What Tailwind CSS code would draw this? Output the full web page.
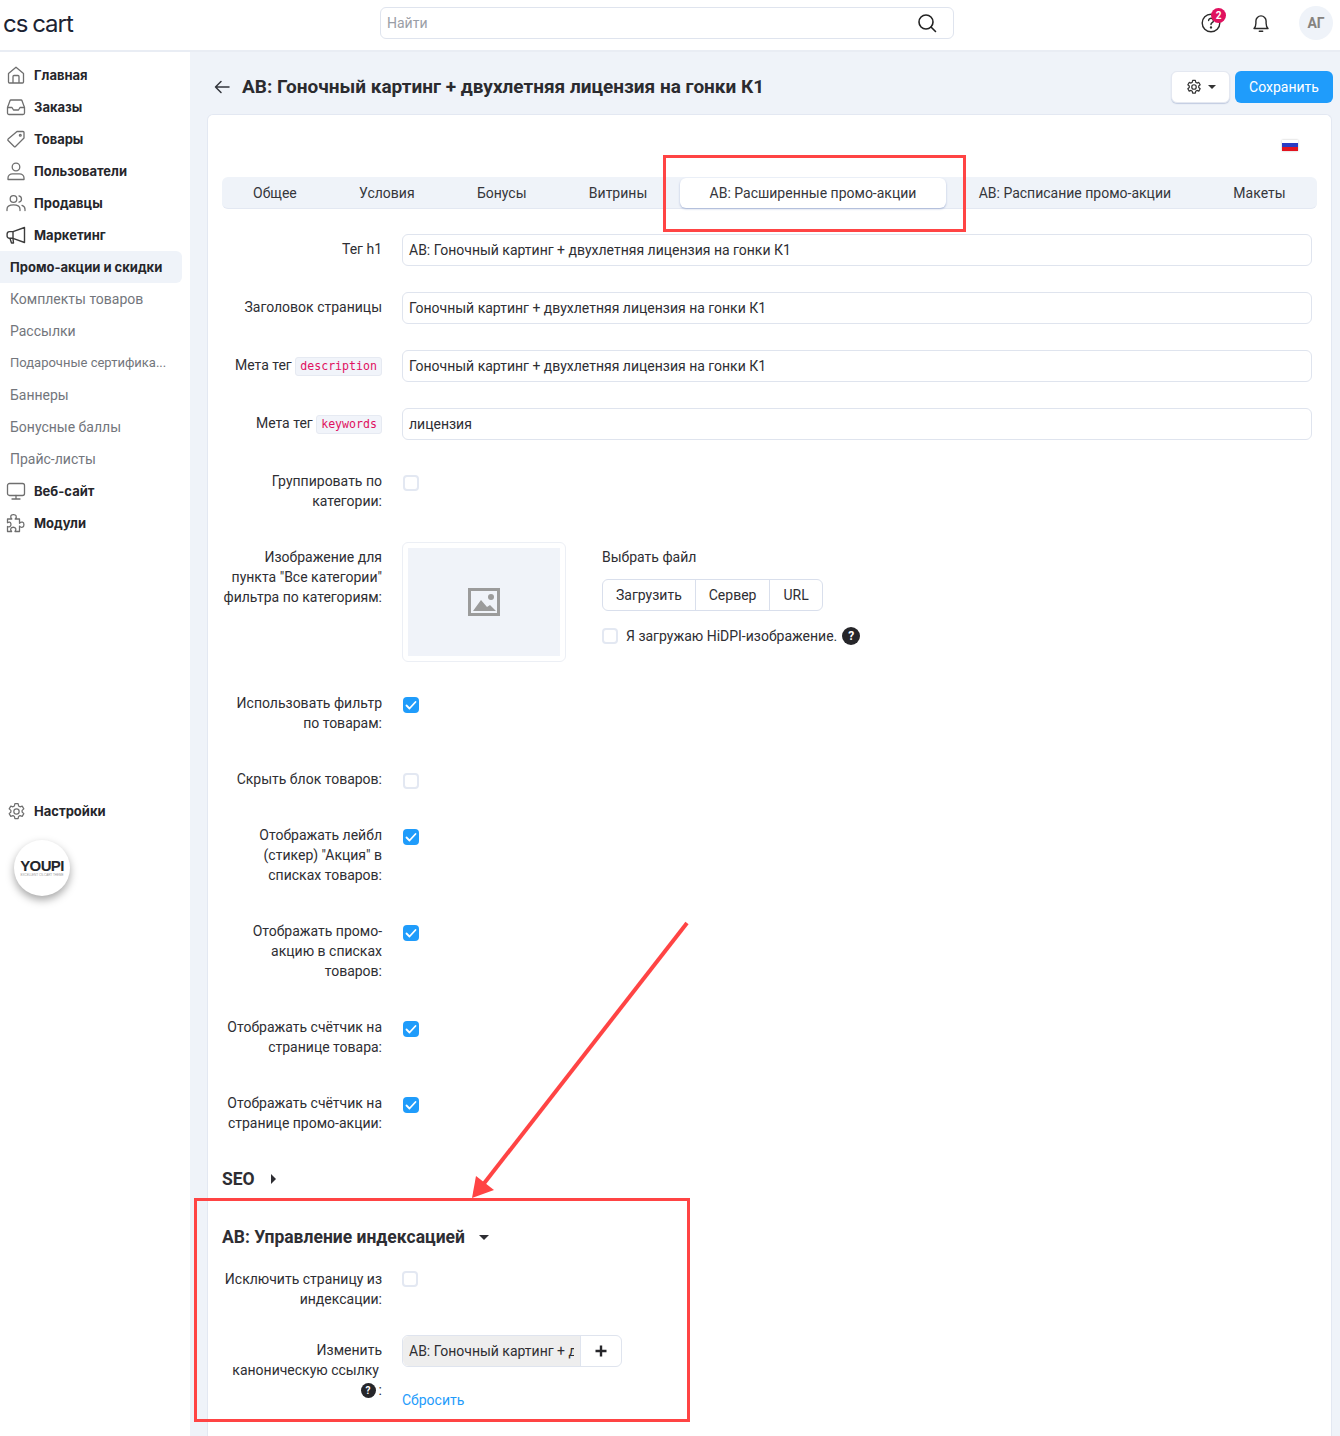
<!DOCTYPE html>
<html lang="ru">
<head>
	<meta charset="UTF-8">
	<title>АВ: Гоночный картинг + двухлетняя лицензия на гонки К1</title>
	<script src="https://cdn.jsdelivr.net/npm/@tailwindcss/browser@4"></script>
</head>
<body class="relative w-[1340px] h-[1436px] overflow-hidden bg-[#eff3f9] font-['Roboto',sans-serif] text-[14px] leading-5 text-[#2e2e33]">

	<!-- top bar -->
	<header class="h-[52px] bg-white border-b-2 border-[#e9edf4] flex items-center relative">
		<div class="pl-[3px] w-[380px] font-['Inter',sans-serif] font-normal text-[24px] leading-none tracking-[-1px] [word-spacing:-1px] text-[#1c2333] pb-[3px]">cs cart</div>
		<div class="w-[574px] h-8 mb-[4px] border border-[#dfe4ee] rounded-md flex items-center justify-between pl-[6px] pr-[16px] text-[#9a9ea6]">
			<span>Найти</span>
			<svg class="w-[20px] h-[20px]" viewBox="0 0 20 20" fill="none" stroke="#222" stroke-width="1.6"><circle cx="9" cy="9" r="7"/><path d="M14 14l4.5 4.5" stroke-linecap="round"/></svg>
		</div>
		<div class="ml-auto flex items-center pr-[7px] pb-[4px]">
			<div class="relative w-[20px] h-[20px] mr-[30px]">
				<svg class="w-[20px] h-[20px]" viewBox="0 0 20 20" fill="none" stroke="#2b2b2b" stroke-width="1.4"><circle cx="10" cy="10" r="8.8"/><path d="M7.6 7.6a2.4 2.4 0 1 1 3.6 2.1c-.8.5-1.2 1-1.2 1.9" stroke-linecap="round"/><circle cx="10" cy="14.4" r=".5"/></svg>
				<span class="absolute left-[10px] top-[-5px] w-[15px] h-[15px] rounded-full bg-[#e0115f] text-white text-[10px] leading-[15px] font-bold text-center">2</span>
			</div>
			<svg class="w-[20px] h-[20px] mr-[28px]" viewBox="0 0 20 20" fill="none" stroke="#2b2b2b" stroke-width="1.4"><path d="M3 15.5c1.4-1.3 1.9-2.6 1.9-5.2V8a5.1 5.1 0 0 1 10.2 0v2.3c0 2.6.5 3.9 1.9 5.2z" stroke-linejoin="round"/><path d="M8.3 18.3h3.4" stroke-linecap="round"/></svg>
			<div class="w-[34px] h-[34px] rounded-full bg-[#eff3f9] flex items-center justify-center font-bold text-[#86837f]">АГ</div>
		</div>
	</header>

	<div class="flex h-[1384px]">
		<!-- sidebar -->
		<aside class="w-[190px] shrink-0 bg-white pt-[7px] font-['Inter',sans-serif]">
			<a class="flex items-center h-8 pl-[6px] gap-[8px] font-bold text-[13px] text-[#26262b]">
				<svg class="w-[20px] h-[20px] shrink-0" viewBox="0 0 20 20" fill="none" stroke="#6f6f6f" stroke-width="1.3" stroke-linejoin="round"><path d="M2.5 8.6 10 2.2l7.500 6.400V17a1 1 0 0 1-1 1h-13a1 1 0 0 1-1-1z"/><path d="M7 18v-6.500a1 1 0 0 1 1-1h4a1 1 0 0 1 1 1V18"/></svg>
				Главная</a>
			<a class="flex items-center h-8 pl-[6px] gap-[8px] font-bold text-[13px] text-[#26262b]">
				<svg class="w-[20px] h-[20px] shrink-0" viewBox="0 0 20 20" fill="none" stroke="#6f6f6f" stroke-width="1.3" stroke-linejoin="round"><path d="M1.500 10.500 4 3.800a1 1 0 0 1 1-.8h10a1 1 0 0 1 1 .8l2.500 6.700V16a1.500 1.500 0 0 1-1.500 1.500H3A1.500 1.500 0 0 1 1.500 16z"/><path d="M1.500 10.500H6l1.500 2.500h5l1.500-2.500h4.500"/></svg>
				Заказы</a>
			<a class="flex items-center h-8 pl-[6px] gap-[8px] font-bold text-[13px] text-[#26262b]">
				<svg class="w-[20px] h-[20px] shrink-0" viewBox="0 0 20 20" fill="none" stroke="#6f6f6f" stroke-width="1.3" stroke-linejoin="round"><path d="M11 2.500h6a1 1 0 0 1 1 1V9l-8.500 8.500a1 1 0 0 1-1.400 0l-6-6a1 1 0 0 1 0-1.400z"/><circle cx="14.300" cy="6.200" r=".9"/></svg>
				Товары</a>
			<a class="flex items-center h-8 pl-[6px] gap-[8px] font-bold text-[13px] text-[#26262b]">
				<svg class="w-[20px] h-[20px] shrink-0" viewBox="0 0 20 20" fill="none" stroke="#6f6f6f" stroke-width="1.3" stroke-linejoin="round"><circle cx="10" cy="6" r="3.800"/><path d="M2 18.500v-1.500c0-2.500 2.200-4.200 4.500-4.200h7c2.300 0 4.500 1.700 4.500 4.200v1.500z"/></svg>
				Пользователи</a>
			<a class="flex items-center h-8 pl-[6px] gap-[8px] font-bold text-[13px] text-[#26262b]">
				<svg class="w-[20px] h-[20px] shrink-0" viewBox="0 0 20 20" fill="none" stroke="#6f6f6f" stroke-width="1.3" stroke-linecap="round"><circle cx="7.500" cy="6" r="3.300"/><path d="M1 17.500v-1.300c0-2.600 2.400-4.400 6.500-4.400s6.500 1.800 6.500 4.400v1.300"/><path d="M13 2.800a3.300 3.300 0 0 1 0 6.400M16 12.300c1.800.7 3 2 3 3.900v1.300"/></svg>
				Продавцы</a>
			<a class="flex items-center h-8 pl-[6px] gap-[8px] font-bold text-[13px] text-[#26262b]">
				<svg class="w-[20px] h-[20px] shrink-0" viewBox="0 0 20 20" fill="none" stroke="#3c3c3c" stroke-width="1.4" stroke-linejoin="round"><path d="M18.500 2.500v15L7 13.300H3.500a2.400 2.400 0 0 1-2.400-2.600V9a2.500 2.500 0 0 1 2.400-2.400H7z"/><path d="M7 6.600v6.700M4 13.500l1.500 4.500h2L7 13.500"/></svg>
				Маркетинг</a>
			<a class="flex items-center h-8 pl-[10px] mr-2 rounded-r-md bg-[#eff3f9] font-bold text-[13px] text-[#26262b]">Промо-акции и скидки</a>
			<div class="font-['Roboto',sans-serif] text-[14px] text-[#73767c]">
				<a class="flex items-center h-8 pl-[10px]">Комплекты товаров</a>
				<a class="flex items-center h-8 pl-[10px]">Рассылки</a>
				<a class="flex items-center h-8 pl-[10px] text-[13px]">Подарочные сертифика...</a>
				<a class="flex items-center h-8 pl-[10px]">Баннеры</a>
				<a class="flex items-center h-8 pl-[10px]">Бонусные баллы</a>
				<a class="flex items-center h-8 pl-[10px]">Прайс-листы</a>
			</div>
			<a class="flex items-center h-8 pl-[6px] gap-[8px] font-bold text-[13px] text-[#26262b]">
				<svg class="w-[20px] h-[20px] shrink-0" viewBox="0 0 20 20" fill="none" stroke="#6f6f6f" stroke-width="1.3" stroke-linejoin="round"><rect x="1.500" y="2.500" width="17" height="12" rx="2"/><path d="M10 14.500v3.500M6 18h8" stroke-linecap="round"/></svg>
				Веб-сайт</a>
			<a class="flex items-center h-8 pl-[6px] gap-[8px] font-bold text-[13px] text-[#26262b]">
				<svg class="w-[20px] h-[20px] shrink-0" viewBox="0 0 20 20" fill="none" stroke="#6f6f6f" stroke-width="1.3" stroke-linejoin="round"><path d="M1.500 6h4.300c-1-.9-1.300-1.800-1-3 .4-1.700 4.400-2 5.300-.2.500 1.100.2 2.200-.9 3.200h4.300v4.300c.9-1.100 2-1.400 3-1.100 1.900.6 1.900 4.400 0 5-1 .3-2.100 0-3-1.100v5.400H9c.9-1.100 1.100-2.100.7-3-.8-1.700-4.200-1.700-4.900 0-.4.900-.2 1.900.8 3H1.500v-5c1.100.6 2.200.6 2.900-.3 1-1.300.6-3.700-.7-4.100-.9-.2-1.600.1-2.200.6z"/></svg>
				Модули</a>
			<a class="flex items-center h-8 pl-[7px] gap-[8px] mt-[256px] font-bold text-[13px] text-[#26262b]">
				<svg class="w-[19px] h-[19px] shrink-0" viewBox="0 0 20 20" fill="none" stroke="#6f6f6f" stroke-width="1.300" stroke-linejoin="round"><path d="M8.300 1.800h3.400l.5 2.400 1.500.9 2.300-.8 1.700 2.900-1.800 1.600v1.800l1.800 1.600-1.700 2.900-2.300-.8-1.500.9-.5 2.400H8.300l-.5-2.400-1.500-.9-2.300.8-1.700-2.900 1.800-1.600V8.800L2.300 7.200 4 4.300l2.300.8 1.500-.9z"/><circle cx="10" cy="10" r="2.800"/></svg>
				Настройки</a>
			<div class="ml-[14px] mt-[13px] w-14 h-14 rounded-full bg-white shadow-[0_4px_9px_rgba(0,0,0,0.35)] flex flex-col items-center justify-center">
				<span class="font-['Liberation_Sans',sans-serif] font-bold text-[15px] leading-[14px] tracking-[-0.6px] text-[#23262c]">YOUPI</span>
				<span class="font-['Liberation_Sans',sans-serif] text-[3px] leading-[4px] text-[#999]">EXCELLENT CS-CART THEME</span>
			</div>
		</aside>

		<!-- main -->
		<main class="flex-1 min-w-0 pl-[17px] pr-[8px]">
			<div class="flex items-center h-8 mt-[19px] -mr-px">
				<svg class="w-[16px] h-[14px] ml-[7px] mr-[12px]" viewBox="0 0 16 14" fill="none" stroke="#33363d" stroke-width="1.500" stroke-linecap="round" stroke-linejoin="round"><path d="M15 7H1.500M7 1.500 1.500 7 7 12.500"/></svg>
				<h1 class="font-bold text-[19px] leading-6 text-[#2b2b2f]">АВ: Гоночный картинг + двухлетняя лицензия на гонки К1</h1>
				<div class="ml-auto w-[59px] h-8 bg-white rounded-md border border-[#e4e8f1] shadow-[0_1px_1px_rgba(150,165,200,0.5)] flex items-center justify-center gap-[6px] mr-[5px]">
					<svg class="w-[16px] h-[16px]" viewBox="0 0 20 20" fill="none" stroke="#333" stroke-width="1.500" stroke-linejoin="round"><path d="M8.300 1.800h3.400l.5 2.400 1.500.9 2.300-.8 1.700 2.900-1.800 1.600v1.800l1.800 1.600-1.700 2.900-2.300-.8-1.500.9-.5 2.400H8.300l-.5-2.400-1.500-.9-2.300.8-1.700-2.900 1.800-1.600V8.800L2.300 7.200 4 4.300l2.300.8 1.500-.9z"/><circle cx="10" cy="10" r="2.800"/></svg>
					<span class="w-0 h-0 border-x-[4px] border-x-transparent border-t-[4px] border-t-[#333]"></span>
				</div>
				<button class="w-[98px] h-8 rounded-md bg-[#1f9cfb] text-white">Сохранить</button>
			</div>

			<!-- card -->
			<section class="h-[1322px] mt-[11px] bg-white rounded-t-md border border-b-0 border-[#e3e8f2] pl-[14px] pr-[14px]">
				<div class="h-[62px] flex justify-end items-start pt-[25px] pr-[19px]">
					<div class="w-4 h-[11px] flex flex-col shadow-[0_0_2px_rgba(0,0,0,0.25)]">
						<span class="h-[3px] bg-white"></span><span class="h-1 bg-[#2a3bc4]"></span><span class="h-1 bg-[#e2131f]"></span>
					</div>
				</div>
				<nav class="h-8 rounded-md bg-[#eff3f9] border-b border-[#e3e8f2] flex items-center pl-[1px] gap-[2.300px] text-[#35363b]">
					<a class="px-[30px]">Общее</a>
					<a class="px-[30px]">Условия</a>
					<a class="px-[30px]">Бонусы</a>
					<a class="px-[30px]">Витрины</a>
					<a class="px-[30px] h-[30px] leading-[30px] bg-white rounded-md shadow-[0_1px_2px_rgba(120,140,190,0.6)] whitespace-nowrap">АВ: Расширенные промо-акции</a>
					<a class="px-[30px] whitespace-nowrap">АВ: Расписание промо-акции</a>
					<a class="px-[30px]">Макеты</a>
				</nav>

				<div class="pt-[25px] pr-[5px]">
					<div class="flex gap-5 mb-[26px]">
						<label class="w-[160px] shrink-0 text-right pt-[5px]">Тег h1</label>
						<div class="flex-1 h-8 border border-[#dfe4ee] rounded-md px-[6px] leading-[30px]">АВ: Гоночный картинг + двухлетняя лицензия на гонки К1</div>
					</div>
					<div class="flex gap-5 mb-[26px]">
						<label class="w-[160px] shrink-0 text-right pt-[5px]">Заголовок страницы</label>
						<div class="flex-1 h-8 border border-[#dfe4ee] rounded-md px-[6px] leading-[30px]">Гоночный картинг + двухлетняя лицензия на гонки К1</div>
					</div>
					<div class="flex gap-5 mb-[26px]">
						<label class="w-[160px] shrink-0 text-right pt-[5px] whitespace-nowrap">Мета тег <code class="inline-block h-[19px] px-[4px] rounded-[3px] border border-[#e6eaf2] bg-[#f1f4fa] font-['DejaVu_Sans_Mono',monospace] text-[11.600px] leading-[16px] text-[#e0115f] align-[0px]">description</code></label>
						<div class="flex-1 h-8 border border-[#dfe4ee] rounded-md px-[6px] leading-[30px]">Гоночный картинг + двухлетняя лицензия на гонки К1</div>
					</div>
					<div class="flex gap-5 mb-[26px]">
						<label class="w-[160px] shrink-0 text-right pt-[5px] whitespace-nowrap">Мета тег <code class="inline-block h-[19px] px-[4px] rounded-[3px] border border-[#e6eaf2] bg-[#f1f4fa] font-['DejaVu_Sans_Mono',monospace] text-[11.600px] leading-[16px] text-[#e0115f] align-[0px]">keywords</code></label>
						<div class="flex-1 h-8 border border-[#dfe4ee] rounded-md px-[6px] leading-[30px]">лицензия</div>
					</div>

					<div class="flex gap-5 mb-[31px]">
						<label class="w-[160px] shrink-0 text-right pt-[5px]">Группировать по категории:</label>
						<span class="ml-px mt-[9px] w-4 h-4 rounded-[4px] border-2 border-[#e3e8f2] bg-white"></span>
					</div>

					<div class="flex gap-5 mb-[24px]">
						<label class="w-[160px] shrink-0 text-right pt-[5px]">Изображение для пункта "Все категории" фильтра по категориям:</label>
						<div class="w-[164px] h-[120px] p-[5px] border border-[#eceff5] rounded-md">
							<div class="h-full bg-[#f0f3f9] flex items-center justify-center">
								<svg class="w-8 h-[28px]" viewBox="0 0 32 28"><path fill="#9b9b9b" fill-rule="evenodd" d="M0 0h32v28H0zM3 3v22h26V3z"/><path fill="#9b9b9b" d="M5 23l8-11 6 7 3-2 6 6z"/><circle fill="#9b9b9b" cx="23" cy="9" r="3"/></svg>
							</div>
						</div>
						<div class="ml-4">
							<div class="pt-[5px]">Выбрать файл</div>
							<div class="mt-[12px] inline-flex h-8 border border-[#d9dfec] rounded-md">
								<span class="px-[13px] leading-[30px] border-r border-[#d9dfec]">Загрузить</span>
								<span class="px-[13px] leading-[30px] border-r border-[#d9dfec]">Сервер</span>
								<span class="px-[13px] leading-[30px]">URL</span>
							</div>
							<div class="mt-[15px] flex items-center">
								<span class="w-4 h-4 rounded-[4px] border-2 border-[#e3e8f2] bg-white mr-2"></span>
								Я загружаю HiDPI-изображение.
								<span class="ml-[5px] w-[18px] h-[18px] rounded-full bg-[#26262a] text-white text-[12px] leading-[18px] font-bold text-center">?</span>
							</div>
						</div>
					</div>

					<div class="flex gap-5 mb-[29px]">
						<label class="w-[160px] shrink-0 text-right pt-[7px]">Использовать фильтр по товарам:</label>
						<span class="ml-px mt-[11px] w-4 h-4 rounded-[4px] bg-[#1f9cfb] flex items-center justify-center">
							<svg class="w-[12px] h-[12px]" viewBox="0 0 12 12" fill="none" stroke="#fff" stroke-width="1.800" stroke-linecap="round" stroke-linejoin="round"><path d="M1.500 6.500 4.500 9.500 10.500 3"/></svg>
						</span>
					</div>
					<div class="flex gap-5 mb-[29px]">
						<label class="w-[160px] shrink-0 text-right pt-[7px]">Скрыть блок товаров:</label>
						<span class="ml-px mt-[11px] w-4 h-4 rounded-[4px] border-2 border-[#e3e8f2] bg-white"></span>
					</div>
					<div class="flex gap-5 mb-[29px]">
						<label class="w-[160px] shrink-0 text-right pt-[7px]">Отображать лейбл (стикер) "Акция" в списках товаров:</label>
						<span class="ml-px mt-[11px] w-4 h-4 rounded-[4px] bg-[#1f9cfb] flex items-center justify-center">
							<svg class="w-[12px] h-[12px]" viewBox="0 0 12 12" fill="none" stroke="#fff" stroke-width="1.800" stroke-linecap="round" stroke-linejoin="round"><path d="M1.500 6.500 4.500 9.500 10.500 3"/></svg>
						</span>
					</div>
					<div class="flex gap-5 mb-[29px]">
						<label class="w-[160px] shrink-0 text-right pt-[7px]">Отображать промо-акцию в списках товаров:</label>
						<span class="ml-px mt-[11px] w-4 h-4 rounded-[4px] bg-[#1f9cfb] flex items-center justify-center">
							<svg class="w-[12px] h-[12px]" viewBox="0 0 12 12" fill="none" stroke="#fff" stroke-width="1.800" stroke-linecap="round" stroke-linejoin="round"><path d="M1.500 6.500 4.500 9.500 10.500 3"/></svg>
						</span>
					</div>
					<div class="flex gap-5 mb-[29px]">
						<label class="w-[160px] shrink-0 text-right pt-[7px]">Отображать счётчик на странице товара:</label>
						<span class="ml-px mt-[11px] w-4 h-4 rounded-[4px] bg-[#1f9cfb] flex items-center justify-center">
							<svg class="w-[12px] h-[12px]" viewBox="0 0 12 12" fill="none" stroke="#fff" stroke-width="1.800" stroke-linecap="round" stroke-linejoin="round"><path d="M1.500 6.500 4.500 9.500 10.500 3"/></svg>
						</span>
					</div>
					<div class="flex gap-5 mb-[34px]">
						<label class="w-[160px] shrink-0 text-right pt-[7px]">Отображать счётчик на странице промо-акции:</label>
						<span class="ml-px mt-[11px] w-4 h-4 rounded-[4px] bg-[#1f9cfb] flex items-center justify-center">
							<svg class="w-[12px] h-[12px]" viewBox="0 0 12 12" fill="none" stroke="#fff" stroke-width="1.800" stroke-linecap="round" stroke-linejoin="round"><path d="M1.500 6.500 4.500 9.500 10.500 3"/></svg>
						</span>
					</div>

					<div class="flex items-center h-[24px] font-bold text-[17.500px]">SEO
						<span class="ml-[16px] w-0 h-0 border-y-[5px] border-y-transparent border-l-[5px] border-l-[#2e2e33]"></span>
					</div>
					<div class="flex items-center h-[24px] mt-[34px] font-bold text-[17.500px]">АВ: Управление индексацией
						<span class="ml-[14px] w-0 h-0 border-x-[5px] border-x-transparent border-t-[5px] border-t-[#2e2e33]"></span>
					</div>

					<div class="flex gap-5 mt-[13px] mb-[26px]">
						<label class="w-[160px] shrink-0 text-right pt-[7px]">Исключить страницу из индексации:</label>
						<span class="mt-[9px] w-4 h-4 rounded-[4px] border-2 border-[#e3e8f2] bg-white"></span>
					</div>
					<div class="flex gap-5">
						<label class="w-[160px] shrink-0 text-right pt-[5px]">Изменить<br><span class="mr-[3px]">каноническую ссылку</span><br><span class="inline-block w-[15px] h-[15px] mr-[3px] rounded-full bg-[#26262a] text-white text-[10px] leading-[15px] font-bold text-center align-[1px]">?</span>:</label>
						<div>
							<div class="flex w-[220px] h-8 border border-[#dfe4ee] rounded-md">
								<div class="w-[177px] bg-[#eeeeee] rounded-l-md pl-[6px] leading-[30px]">
									<div class="w-[165px] overflow-hidden whitespace-nowrap">АВ: Гоночный картинг + двухлетняя</div>
								</div>
								<div class="flex-1 flex items-center justify-center border-l border-[#dfe4ee]">
									<svg class="w-[12px] h-[12px]" viewBox="0 0 12 12" stroke="#26262a" stroke-width="2.400"><path d="M6 .5v11M.5 6h11"/></svg>
								</div>
							</div>
							<a class="block mt-[23px] text-[#1f9cfb]">Сбросить</a>
						</div>
					</div>
				</div>
			</section>
		</main>
	</div>

	<!-- red annotations over the screenshot -->
	<div class="absolute left-[663px] top-[155px] w-[303px] h-[77px] border-[3px] border-[#ff4444]"></div>
	<div class="absolute left-[194px] top-[1198px] w-[496px] h-[224px] border-[3px] border-[#ff4444]"></div>
	<svg class="absolute left-0 top-0 pointer-events-none" width="1340" height="1436" fill="none">
		<path d="M687 923 482 1186" stroke="#ff4444" stroke-width="4"/>
		<path d="M472 1198 476 1176 494 1190z" fill="#ff4444"/>
	</svg>
</body>
</html>
